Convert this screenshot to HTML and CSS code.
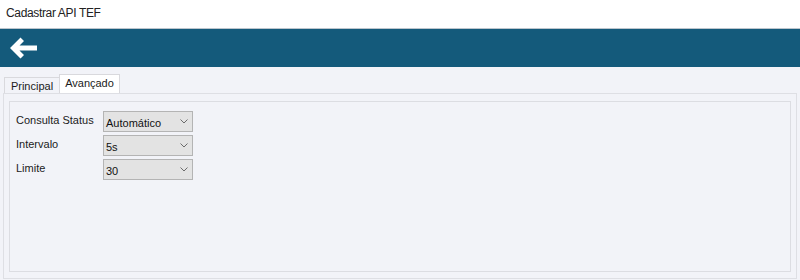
FILE: index.html
```html
<!DOCTYPE html>
<html lang="pt-BR">
<head>
    <meta charset="UTF-8">
    <title>Cadastrar API TEF</title>
    <link rel="stylesheet" href="styles.css">
</head>
<body>

<div class="titlebar">Cadastrar API TEF</div>

<div class="toolbar">
    <svg class="back" width="28" height="22" viewBox="0 0 28 22">
        <polygon fill="#fff" points="0,11 10.5,0.5 14,4 9.5,8.5 27,8.5 27,13.5 9.5,13.5 14,18 10.5,21.5"/>
    </svg>
</div>

<div class="tabs">
    <div class="tab">Principal</div>
    <div class="tab active">Avançado</div>
</div>

<div class="page">
    <div class="group">
        <div class="row">
            <div class="label">Consulta Status</div>
            <div class="combo"><span>Automático</span><svg width="8" height="5" viewBox="0 0 8 5"><polyline points="0.5,0.5 4,4 7.5,0.5" fill="none" stroke="#6b6b6b" stroke-width="1"/></svg></div>
        </div>
        <div class="row">
            <div class="label">Intervalo</div>
            <div class="combo"><span>5s</span><svg width="8" height="5" viewBox="0 0 8 5"><polyline points="0.5,0.5 4,4 7.5,0.5" fill="none" stroke="#6b6b6b" stroke-width="1"/></svg></div>
        </div>
        <div class="row">
            <div class="label">Limite</div>
            <div class="combo"><span>30</span><svg width="8" height="5" viewBox="0 0 8 5"><polyline points="0.5,0.5 4,4 7.5,0.5" fill="none" stroke="#6b6b6b" stroke-width="1"/></svg></div>
        </div>
    </div>
</div>

</body>
</html>
```

FILE: styles.css
```css
body {
    margin: 0;
    font-family: "Liberation Sans", Arial, sans-serif;
    font-size: 11px;
    color: #1b1b1b;
    background-color: #f2f3f8;
    overflow: hidden;
}
.titlebar {
    height: 28px;
    line-height: 27px;
    padding-left: 6px;
    font-size: 12px;
    letter-spacing: -0.35px;
    color: #222;
    background-color: #fff;
    border-bottom: 1px solid #bcc5cd;
}
.toolbar {
    height: 38px;
    background-color: #145a7b;
    display: flex;
    align-items: center;
    padding-left: 10px;
}
.tabs {
    display: flex;
    align-items: flex-end;
    margin-top: 7px;
    padding-left: 4px;
    height: 19px;
}
.tab {
    box-sizing: border-box;
    width: 55px;
    height: 16px;
    line-height: 16px;
    text-align: center;
    border: 1px solid #d9d9dd;
    border-bottom: none;
    border-right: none;
}
.tab.active {
    width: 61px;
    height: 19px;
    line-height: 16px;
    background-color: #fff;
    border-right: 1px solid #d9d9dd;
}
.page {
    box-sizing: border-box;
    margin-left: 3px;
    width: 794px;
    height: 186px;
    border: 1px solid #dedfe4;
    padding: 7px 5px 6px 5px;
}
.group {
    box-sizing: border-box;
    height: 171px;
    border: 1px solid #dcdde2;
    padding: 9px 0 0 6px;
    display: flex;
    flex-direction: column;
    gap: 3px;
}
.row {
    display: flex;
    align-items: center;
    height: 21px;
}
.label {
    width: 87px;
    margin-top: -3px;
}
.combo {
    box-sizing: border-box;
    width: 90px;
    height: 21px;
    border: 1px solid #b4b4b4;
    background-color: #e3e3e3;
    display: flex;
    align-items: center;
    justify-content: space-between;
    padding: 2px 4px 0 2px;
    color: #111;
}
.combo svg {
    margin-top: -2px;
}
```
